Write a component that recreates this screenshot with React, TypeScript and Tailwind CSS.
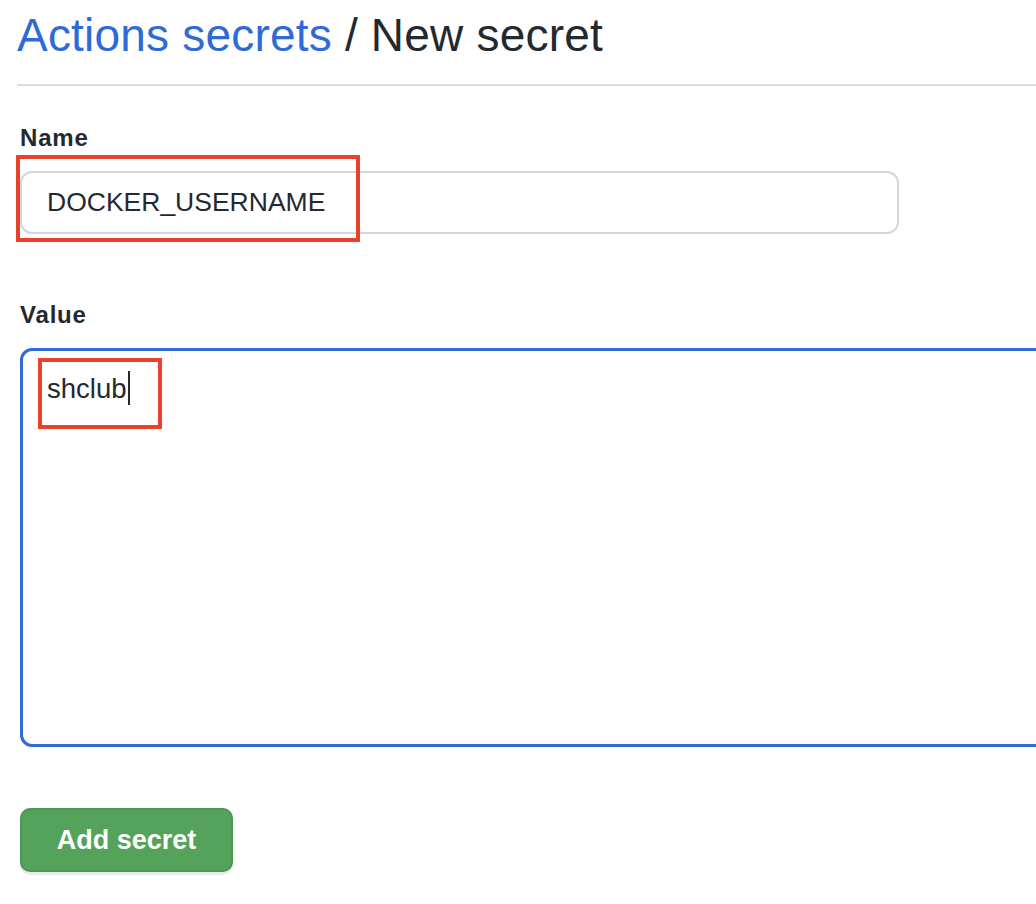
import React from "react";

export default function App() {
  return (
    <div className="relative w-[1036px] h-[904px] overflow-hidden bg-white text-[#24292f] font-['Liberation_Sans',Arial,sans-serif]">
      <div className="pl-[17px] pt-[7px]">
        <h1 className="text-[46px] leading-[56px] font-normal tracking-[0.2px]">
          <span className="text-[#2f6ad6]">Actions secrets</span>
          <span> / New secret</span>
        </h1>
        <div className="mt-[21px] h-[2px] bg-[#d8dee4]" />
      </div>

      <div className="pl-[20px]">
        <label className="mt-[38px] block text-[24px] leading-[28px] font-bold tracking-[0.8px]">Name</label>
        <div className="relative mt-[19px] w-[879px]">
          <div className="h-[63px] rounded-[12px] border-2 border-[#d0d7de] pl-[25px] flex items-center text-[26.5px] leading-none">
            DOCKER_USERNAME
          </div>
          <div className="absolute left-[-4px] top-[-16px] w-[344px] h-[87px] border-[4.5px] border-[#e8432a] pointer-events-none" />
        </div>

        <label className="mt-[67px] block text-[24px] leading-[28px] font-bold tracking-[0.8px]">Value</label>
        <div className="relative mt-[19px] w-[1040px]">
          <div className="h-[399px] rounded-[12px] border-[3px] border-[#2f6ad6] pl-[24px] pt-[20px] text-[27.5px] leading-[34px]">
            <span>shclub</span>
            <span className="inline-block align-[-7px] ml-[1px] w-[2px] h-[34px] bg-[#24292f]" />
          </div>
          <div className="absolute left-[18px] top-[10px] w-[124px] h-[71px] border-[4.5px] border-[#e8432a] pointer-events-none" />
        </div>

        <button className="mt-[61px] w-[213px] h-[64px] rounded-[10px] bg-[#55a35a] border-2 border-[#4f9654] shadow-[0_3px_0_rgba(0,0,0,0.08)] text-white text-[27px] font-bold flex items-center justify-center">
          Add secret
        </button>
      </div>
    </div>
  );
}
